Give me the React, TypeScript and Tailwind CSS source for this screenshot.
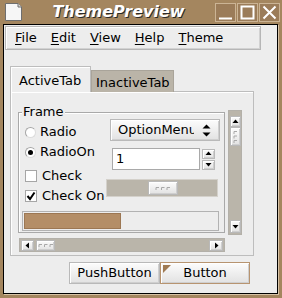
import React from "react"

function Tri({ dir }: { dir: "up" | "down" | "left" | "right" }) {
  const pts = {
    up: "0.5,5 3.5,1.5 6.5,5",
    down: "0.5,2 3.5,5.5 6.5,2",
    left: "5,0.5 1.5,3.5 5,6.5",
    right: "2,0.5 5.5,3.5 2,6.5",
  }[dir]
  return (
    <svg width="7" height="7" viewBox="0 0 7 7">
      <polygon points={pts} fill="#000" />
    </svg>
  )
}

function Grip({ vertical }: { vertical?: boolean }) {
  if (vertical)
    return (
      <svg width="5" height="14" viewBox="0 0 5 14">
        <path d="M1 4V1.5h3M1 8.5V6h3M1 13V10.5h3" stroke="#a8a8a8" fill="none" />
      </svg>
    )
  return (
    <svg width="16" height="5" viewBox="0 0 16 5">
      <path d="M1 4V1.5h3M6.5 4V1.5h3M12 4V1.5h3" stroke="#a8a8a8" fill="none" />
    </svg>
  )
}

const raised =
  "border border-[#b9b9b9] bg-linear-to-b from-[#fcfcfc] to-[#e2e2e2] shadow-[inset_1px_1px_0_#fff,inset_-1px_-1px_0_#cfcfcf]"

function ArrowBtn({ dir, className }: { dir: "up" | "down" | "left" | "right"; className: string }) {
  return (
    <div className={`flex items-center justify-center ${raised} ${className}`}>
      <Tri dir={dir} />
    </div>
  )
}

function TitleBar() {
  return (
    <div className="h-[24px] flex items-center pl-[5px] pr-[2px]">
      <svg width="17" height="18" viewBox="0 0 17 18">
        <path d="M0.5 0.5H13L16.5 4V17.5H0.5Z" fill="#f6f6f6" stroke="#6e6e6e" />
        <path d="M13 0.5V4H16.5" fill="#d8d8d8" stroke="#6e6e6e" />
      </svg>
      <div className="flex-1 text-center font-bold italic text-[16px] text-white [text-shadow:1px_1px_0_#2a2a2a] leading-none">
        ThemePreview
      </div>
      <div className="flex gap-[1px]">
        {["min", "max", "close"].map((k) => (
          <div key={k} className="w-[21px] h-[19px] border border-[#cbb495] bg-[#9b7c59] flex items-center justify-center">
            <svg width="15" height="15" viewBox="0 0 15 15">
              {k === "min" && <path d="M1 13.5H14" stroke="#fff" strokeWidth="2" />}
              {k === "max" && <rect x="1.5" y="1.5" width="12" height="12" stroke="#fff" strokeWidth="2" fill="none" />}
              {k === "close" && <path d="M1.5 1.5L13.5 13.5M13.5 1.5L1.5 13.5" stroke="#fff" strokeWidth="2" />}
            </svg>
          </div>
        ))}
      </div>
    </div>
  )
}

function MenuBar() {
  const items = ["File", "Edit", "View", "Help", "Theme"]
  return (
    <div className="ml-[1px] mt-[1px] w-[256px] h-[24px] border border-[#b6b6b6] shadow-[inset_1px_1px_0_#fff,inset_-1px_-1px_0_#d2d2d2] flex items-center pl-[9px] gap-[14px]">
      {items.map((m) => (
        <span key={m}>
          <span className="underline underline-offset-[2px]">{m[0]}</span>
          {m.slice(1)}
        </span>
      ))}
    </div>
  )
}

function Radio({ on, label }: { on?: boolean; label: string }) {
  return (
    <div className="h-[20px] flex items-center">
      <div className="w-[11px] h-[11px] rounded-full bg-white border border-[#a6a6a6] border-b-[#dcdcdc] border-r-[#dcdcdc] flex items-center justify-center">
        {on && <div className="w-[5px] h-[5px] rounded-full bg-black" />}
      </div>
      <span className="ml-[4px]">{label}</span>
    </div>
  )
}

function Check({ on, label }: { on?: boolean; label: string }) {
  return (
    <div className="h-[20px] flex items-center">
      <div className="w-[12px] h-[12px] bg-white border border-[#a6a6a6] flex items-center justify-center">
        {on && (
          <svg width="10" height="10" viewBox="0 0 10 10">
            <path d="M1.5 5L4 8L8.5 1.5" stroke="#000" strokeWidth="2" fill="none" />
          </svg>
        )}
      </div>
      <span className="ml-[5px]">{label}</span>
    </div>
  )
}

function Frame() {
  return (
    <div className="relative w-[207px] h-[121px] border border-[#a9a9a9] shadow-[inset_1px_1px_0_#fff] flex flex-col">
      <span className="absolute left-[3px] top-[-8px] bg-[#ededed] leading-[14px] px-px">Frame</span>
      <div className="flex">
        <div className="w-[87px] pl-[6px] pt-[9px] flex flex-col">
          <Radio label="Radio" />
          <Radio on label="RadioOn" />
          <div className="mt-[4px]">
            <Check label="Check" />
          </div>
          <Check on label="Check On" />
        </div>
        <div className="flex flex-col">
          <div className={`ml-[4px] mt-[6px] w-[110px] h-[22px] flex items-center ${raised}`}>
            <div className="w-[83px] pl-[7px] overflow-hidden whitespace-nowrap">OptionMenu</div>
            <div className="flex-1 flex items-center justify-center">
              <svg width="9" height="13" viewBox="0 0 9 13">
                <polygon points="0.5,4.5 4.5,0.5 8.5,4.5" fill="#000" />
                <polygon points="0.5,8.5 4.5,12.5 8.5,8.5" fill="#000" />
              </svg>
            </div>
          </div>
          <div className="ml-[6px] mt-[7px] flex items-center gap-[2px]">
            <div className="w-[88px] h-[22px] bg-white border border-[#a9a9a9] flex items-center pl-[3px]">1</div>
            <div className="flex flex-col gap-px">
              <ArrowBtn dir="up" className="w-[13px] h-[10px]" />
              <ArrowBtn dir="down" className="w-[13px] h-[10px]" />
            </div>
          </div>
          <div className="mt-[9px] w-[112px] h-[18px] bg-[#bab5aa] border border-[#d4d1cb] flex items-center pl-[41px]">
            <div className={`w-[30px] h-[14px] flex items-center justify-center ${raised}`}>
              <Grip />
            </div>
          </div>
        </div>
      </div>
      <div className="ml-[3px] mt-[5px] w-[197px] h-[20px] border border-[#b2b2b2] bg-[#ededed] flex p-px">
        <div className="w-[97px] h-full bg-[#b48e67] border border-[#9c7753]" />
      </div>
    </div>
  )
}

function TabWidget() {
  return (
    <div className="ml-[6px] mt-[16px] flex flex-col">
      <div className="flex items-end h-[26px] relative z-10">
        <div className="w-[81px] h-[26px] bg-[#ededed] border border-b-0 border-[#bdbdbd] shadow-[inset_1px_1px_0_#fff] pl-[8px] pt-[4px]">
          ActiveTab
        </div>
        <div className="w-[83px] h-[22px] bg-[#bab4a8] border border-b-0 border-[#a9a49a] pl-[4px] pt-[2px]">
          InactiveTab
        </div>
      </div>
      <div className="w-[244px] h-[165px] -mt-px border border-[#bdbdbd] shadow-[inset_1px_1px_0_#fff] pl-[7px] pt-[14px] flex flex-col">
        <div className="flex">
          <div className="pt-[6px]">
            <Frame />
          </div>
          <div className="ml-[3px] mt-[4px] w-[14px] h-[125px] border border-[#b3b0a9] bg-[#bab5aa] flex flex-col p-px">
            <ArrowBtn dir="up" className="w-[11px] h-[11px] mt-[4px]" />
            <div className={`w-[11px] h-[19px] flex items-center justify-center ${raised}`}>
              <Grip vertical />
            </div>
            <div className="flex-1" />
            <ArrowBtn dir="down" className="w-[11px] h-[13px]" />
          </div>
        </div>
        <div className="mt-[3px] ml-px w-[206px] h-[14px] border border-[#b3b0a9] bg-[#bab5aa] flex items-center px-px">
          <ArrowBtn dir="left" className="w-[13px] h-[11px]" />
          <div className={`ml-[2px] w-[19px] h-[11px] flex items-center justify-center ${raised}`}>
            <Grip />
          </div>
          <div className="flex-1" />
          <ArrowBtn dir="right" className="w-[14px] h-[11px]" />
        </div>
      </div>
    </div>
  )
}

export default function App() {
  return (
    <div className="w-[282px] h-[298px] bg-[#a4865f] font-['DejaVu_Sans',sans-serif] text-[13px] text-black overflow-hidden">
      <TitleBar />
      <div className="ml-[3px] w-[275px] h-[270px] border border-black bg-[#ededed] shadow-[1px_1px_0_#d7c3a6]">
        <MenuBar />
        <TabWidget />
        <div className="mt-[6px] ml-[65px] flex">
          <div className={`w-[91px] h-[22px] flex items-center justify-center ${raised}`}>PushButton</div>
          <div className="relative w-[90px] h-[22px] border border-[#b79470] bg-linear-to-b from-[#fcfcfc] to-[#e2e2e2] shadow-[inset_1px_1px_0_#fff,inset_-1px_-1px_0_#cfcfcf] flex items-center justify-center">
            <div className="absolute left-[2px] top-[2px] w-0 h-0 border-t-[8px] border-r-[8px] border-t-[#a07a52] border-r-transparent" />
            Button
          </div>
        </div>
      </div>
    </div>
  )
}
